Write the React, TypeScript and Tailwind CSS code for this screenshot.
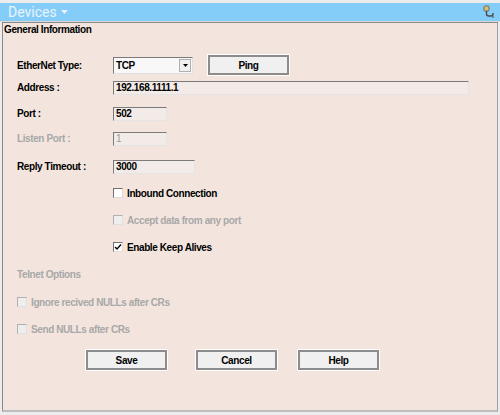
import type { ReactNode } from "react";

const FONT = { fontFamily: '"Liberation Sans", Arial, sans-serif' };

// Dialog text: small bold, squeezed a little to match the narrow system font.
const TXT = "text-[10px] font-bold tracking-[-0.4px]";

type FieldProps = {
  label: string;
  disabled?: boolean;
  children: ReactNode;
  className?: string;
};

const Field = ({ label, disabled, children, className }: FieldProps) => (
  <div className={`flex items-center ${className ?? ""}`}>
    <span
      className={`w-[96px] shrink-0 ${TXT} ${
        disabled ? "text-[#a8a8a8]" : "text-black"
      }`}
    >
      {label}
    </span>
    {children}
  </div>
);

type TextBoxProps = {
  value: string;
  width: string;
  disabled?: boolean;
};

// Sunken edit box: dark top/left edge, light bottom/right edge.
const TextBox = ({ value, width, disabled }: TextBoxProps) => (
  <div
    className={`flex h-[14px] items-center border border-t-[#7a7a7a] border-l-[#7a7a7a] border-r-[#e4e4e4] border-b-[#e4e4e4] bg-[#f3ebe7] pl-[2px] leading-none ${TXT} ${width} ${
      disabled ? "!font-normal text-[#9a9a9a]" : "text-black"
    }`}
  >
    {value}
  </div>
);

type CheckProps = {
  label: string;
  checked?: boolean;
  disabled?: boolean;
  className?: string;
};

const Check = ({ label, checked, disabled, className }: CheckProps) => (
  <div className={`flex h-[14px] items-center gap-[4px] ${className ?? ""}`}>
    <span
      className={`flex h-[10px] w-[10px] items-center justify-center border ${
        disabled
          ? "border-t-[#b0b0b0] border-l-[#b0b0b0] border-r-[#e0e0e0] border-b-[#e0e0e0] bg-[#eeeeee]"
          : "border-t-[#707070] border-l-[#707070] border-r-[#dcdcdc] border-b-[#dcdcdc] bg-white"
      }`}
    >
      {checked && (
        <svg width="8" height="8" viewBox="0 0 8 8">
          <path d="M1 4 L3 6 L7 1.5" stroke="#000" strokeWidth="1.4" fill="none" />
        </svg>
      )}
    </span>
    <span className={`${TXT} ${disabled ? "text-[#a8a8a8]" : "text-black"}`}>
      {label}
    </span>
  </div>
);

const Button = ({ label, className }: { label: string; className?: string }) => (
  <button
    type="button"
    className={`flex h-[20px] w-[81px] items-center justify-center border-2 border-[#8c8c8c] bg-[#f0f0f0] text-black outline outline-1 outline-[#ffffff] ${TXT} ${
      className ?? ""
    }`}
  >
    {label}
  </button>
);

const LinkIcon = () => (
  <svg width="14" height="14" viewBox="0 0 14 14">
    <rect x="2" y="1" width="5" height="5" rx="1" fill="#d8c36a" stroke="#6b6b6b" strokeWidth="1" />
    <path d="M4.5 6 L4.5 9 Q4.5 11 7 11 L9 11 Q11 11 11 9 L11 8" stroke="#4a4a4a" strokeWidth="1.4" fill="none" />
    <path d="M10 12 L12 12" stroke="#4a4a4a" strokeWidth="1.2" />
  </svg>
);

export default function App() {
  return (
    <div
      className="flex h-[415px] w-[500px] flex-col bg-[#ececec] pt-[3px]"
      style={FONT}
    >
      <div className="flex h-[18px] shrink-0 items-center justify-between bg-[#85cdf9] pl-[8px] pr-[4px]">
        <span
          className="flex items-center gap-[4px] text-[14px] leading-none text-[#e8f3fc]"
          style={{ fontFamily: 'Roboto, "Noto Sans", sans-serif' }}
        >
          Devices
          <svg width="7" height="4" viewBox="0 0 7 4">
            <path d="M0 0 L7 0 L3.5 4 Z" fill="#e8f3fc" />
          </svg>
        </span>
        <LinkIcon />
      </div>
      <div className="h-[1px] shrink-0 bg-[#d8d8d8]" />
      <div className="ml-[2px] mr-[2px] flex flex-1 flex-col border-t border-l border-r border-b-2 border-t-[#8a8a8a] border-l-[#8a8a8a] border-r-[#a0a0a0] border-b-[#bdbdbd] bg-[#f3e5de]">
        <div className={`pl-[1px] pt-[1px] leading-[12px] text-black ${TXT}`}>
          General Information
        </div>
        <div className="flex flex-col pl-[14px]">
          <Field label="EtherNet Type:" className="mt-[19px] h-[20px]">
            <div
              className={`flex h-[17px] w-[80px] items-center justify-between border border-t-[#7a7a7a] border-l-[#7a7a7a] border-r-[#e0e0e0] border-b-[#e0e0e0] bg-[#f8f8f8] pl-[2px] pr-[1px] ${TXT}`}
            >
              TCP
              <span className="flex h-[13px] w-[12px] items-center justify-center border border-[#b0b0b0] bg-[#f0f0f0]">
                <svg width="5" height="3" viewBox="0 0 5 3">
                  <path d="M0 0 L5 0 L2.5 3 Z" fill="#000" />
                </svg>
              </span>
            </div>
            <Button label="Ping" className="ml-[15px]" />
          </Field>
          <Field label="Address :" className="mt-[5px] h-[15px]">
            <TextBox value="192.168.1111.1" width="w-[356px]" />
          </Field>
          <Field label="Port :" className="mt-[11px] h-[15px]">
            <TextBox value="502" width="w-[54px]" />
          </Field>
          <Field label="Listen Port :" disabled className="mt-[10px] h-[15px]">
            <TextBox value="1" width="w-[54px]" disabled />
          </Field>
          <Field label="Reply Timeout :" className="mt-[13px] h-[15px]">
            <TextBox value="3000" width="w-[82px]" />
          </Field>
          <Check label="Inbound Connection" className="ml-[96px] mt-[12px]" />
          <Check
            label="Accept data from any port"
            disabled
            className="ml-[96px] mt-[13px]"
          />
          <Check
            label="Enable Keep Alives"
            checked
            className="ml-[96px] mt-[13px]"
          />
          <div className={`mt-[13px] flex h-[14px] items-center text-[#a8a8a8] ${TXT}`}>
            Telnet Options
          </div>
          <Check
            label="Ignore recived NULLs after CRs"
            disabled
            className="mt-[14px]"
          />
          <Check
            label="Send NULLs after CRs"
            disabled
            className="mt-[13px]"
          />
          <div className="mt-[14px] flex gap-[29px] pl-[69px]">
            <Button label="Save" />
            <Button label="Cancel" />
            <Button label="Help" className="-ml-[8px]" />
          </div>
        </div>
      </div>
      <div className="h-[3px] shrink-0" />
    </div>
  );
}
